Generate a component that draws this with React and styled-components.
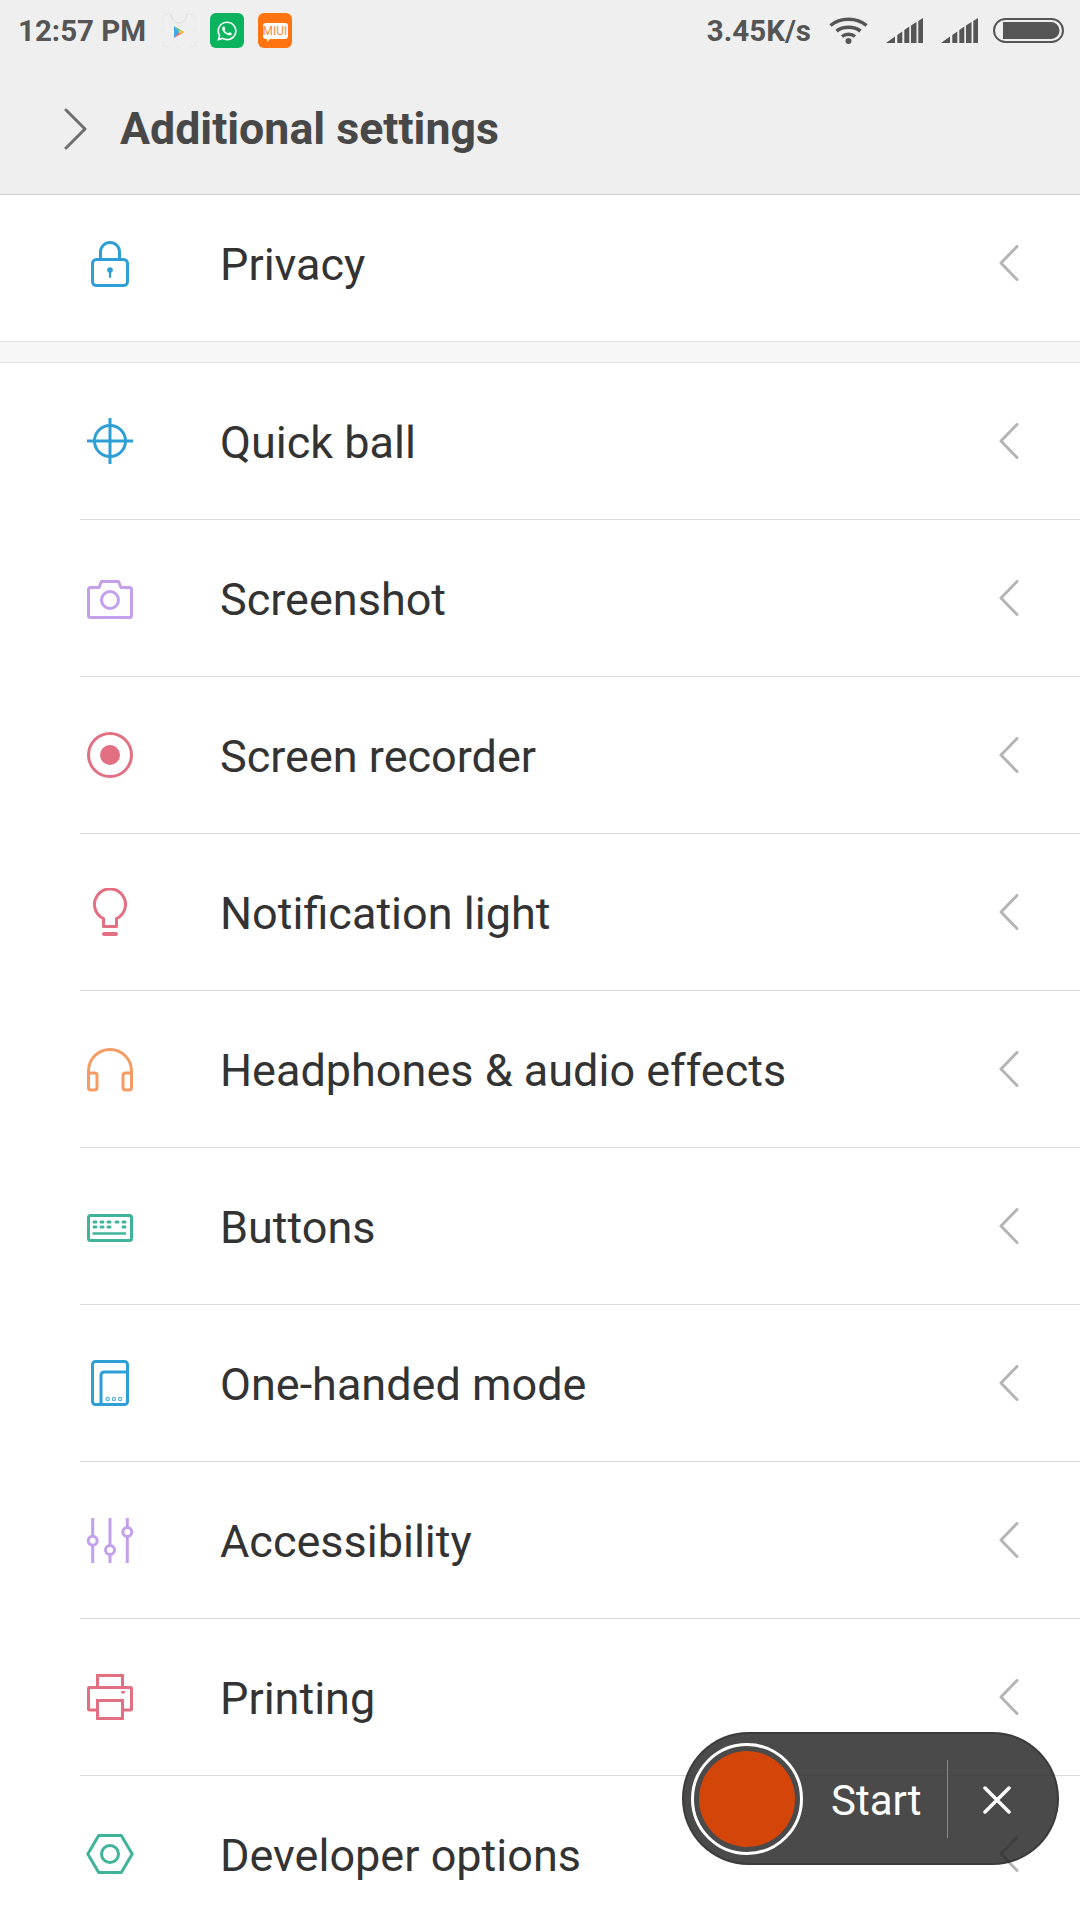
import React from 'react'
import styled, { createGlobalStyle } from 'styled-components'
import { FaWhatsapp } from 'react-icons/fa'

const GlobalStyle = createGlobalStyle`
  html, body {
    margin: 0;
    padding: 0;
    background: #fff;
    font-family: Roboto, "Liberation Sans", sans-serif;
  }
`
const Screen = styled.div`
  width: 1080px;
  height: 1920px;
  position: relative;
  overflow: hidden;
  background: #fff;
`
const Header = styled.header`
  height: 194px;
  background: #efefef;
  border-bottom: 1px solid #cfcfcf;
`
const StatusBar = styled.div`
  height: 60px;
  display: flex;
  align-items: center;
  padding: 0 16px 0 18px;
  color: #555;
  font-size: 29.5px;
  font-weight: 700;
`
const Time = styled.span`
  width: 144px;
  padding-top: 2px;
`
const AppTile = styled.div`
  width: 34px;
  height: 35px;
  margin-right: 14px;
  margin-top: 1px;
  border-radius: 6px;
  display: flex;
  align-items: center;
  justify-content: center;
  background: ${props => props.bg || 'transparent'};
  color: #fff;
`
const MiuiBubble = styled.div`
  width: 25px;
  height: 16px;
  position: relative;
  border-radius: 3px;
  background: #fff;
  color: #ff8a3a;
  font-size: 12px;
  font-weight: 400;
  line-height: 16px;
  text-align: center;
  &::after {
    content: '';
    position: absolute;
    left: 4px;
    bottom: -3px;
    border-top: 3px solid #fff;
    border-right: 3px solid transparent;
  }
`
const Spacer = styled.div`
  flex: 1;
`
const Speed = styled.span`
  margin-right: 18px;
  padding-top: 2px;
`
const StatusIcon = styled.svg`
  display: block;
  margin-left: ${props => props.gap || 0}px;
`
const TitleBar = styled.div`
  height: 131px;
  padding-top: 3px;
  display: flex;
  align-items: center;
  padding-left: 64px;
`
const Title = styled.h1`
  margin: 0 0 0 33px;
  font-size: 44.7px;
  font-weight: 700;
  color: #484848;
`
const Group = styled.section`
  border-bottom: 1px solid #e4e4e4;
`
const Gap = styled.div`
  height: 20px;
  background: #f7f7f7;
  border-bottom: 1px solid #e4e4e4;
`
const Row = styled.div`
  height: ${props => props.height || 156}px;
  margin-left: 80px;
  padding-bottom: ${props => props.pad || 0}px;
  display: flex;
  align-items: center;
  border-bottom: ${props => (props.last ? 'none' : '1px solid #d9d9d9')};
`
const IconSlot = styled.div`
  width: 60px;
  margin-right: 80px;
  padding-top: ${props => props.offset || 0}px;
  display: flex;
  justify-content: center;
`
const Label = styled.span`
  flex: 1;
  padding-top: 2px;
  font-size: 45px;
  color: #333;
`
const Chevron = styled.svg`
  display: block;
  margin-right: 61px;
`
const Recorder = styled.div`
  position: absolute;
  left: 682px;
  top: 1732px;
  width: 377px;
  height: 133px;
  box-sizing: border-box;
  display: flex;
  align-items: center;
  padding-left: 7px;
  border: 2px solid rgba(0, 0, 0, 0.2);
  border-radius: 67px;
  background: rgba(42, 42, 42, 0.85);
  color: #fff;
`
const RecordButton = styled.div`
  width: 112px;
  height: 112px;
  box-sizing: border-box;
  border: 3px solid #fff;
  border-radius: 50%;
  padding: 5px;
  flex: none;
`
const RecordDot = styled.div`
  width: 100%;
  height: 100%;
  border-radius: 50%;
  background: #d4450a;
`
const StartLabel = styled.span`
  margin-left: 28px;
  padding-top: 3px;
  width: 116px;
  font-size: 42px;
`
const Separator = styled.div`
  width: 1px;
  height: 78px;
  background: #8a8a8a;
`
const CloseIcon = styled.svg`
  display: block;
  margin: 3px 0 0 35px;
`

const stroke = { fill: 'none', strokeWidth: 3, strokeLinecap: 'round', strokeLinejoin: 'round' }

const Icon = ({ color, children }) => (
  <svg width="48" height="48" viewBox="0 0 48 48" stroke={color} {...stroke}>
    {children}
  </svg>
)

const LockIcon = () => (
  <Icon color="#2e9fd6">
    <rect x="6.5" y="19.5" width="35" height="26" rx="4" />
    <path d="M14.5 19V12a9.500 9.500 0 0 1 19 0V19" />
    <path d="M24 30v7" strokeWidth="2.200" />
    <circle cx="24" cy="30" r="2.800" fill="#2e9fd6" stroke="none" />
  </Icon>
)
const BallIcon = () => (
  <Icon color="#2e9fd6">
    <circle cx="24" cy="24" r="15.500" />
    <path d="M24 1v46M1 24h46" strokeLinecap="butt" />
  </Icon>
)
const CameraIcon = () => (
  <Icon color="#c39fec">
    <path d="M4.500 13.500H13L15.500 7.500H32.500L35 13.500H43.500a2 2 0 0 1 2 2V41.500a2 2 0 0 1-2 2H4.500a2 2 0 0 1-2-2V15.500a2 2 0 0 1 2-2Z" />
    <circle cx="24" cy="26" r="8.500" />
  </Icon>
)
const RecordIcon = () => (
  <Icon color="#e26f82">
    <circle cx="24" cy="24" r="21.500" />
    <circle cx="24" cy="24" r="8.500" fill="#e26f82" />
  </Icon>
)
const BulbIcon = () => (
  <Icon color="#e26f82">
    <path d="M17.500 30.500A15.500 15.500 0 1 1 30.500 30.500V38.500H17.500Z" />
    <path d="M18 46H30" strokeWidth="4" />
  </Icon>
)
const HeadphonesIcon = () => (
  <Icon color="#f59b63">
    <path d="M2.500 34V26a21.500 21.500 0 0 1 43 0V34" />
    <rect x="2.500" y="28" width="8.500" height="17" rx="2.500" />
    <rect x="37" y="28" width="8.500" height="17" rx="2.500" />
  </Icon>
)
const keys = [[9, 20], [16, 20], [23, 20], [31, 20], [38, 20], [9, 25], [16, 25], [23, 25], [38, 25]]
const KeyboardIcon = () => (
  <Icon color="#40b39b">
    <rect x="2.500" y="13.500" width="43" height="25" rx="2" />
    {keys.map(([x, y]) => (
      <rect key={`${x}-${y}`} x={x - 2.5} y={y - 1.5} width="5" height="3" rx="1.5" fill="#40b39b" stroke="none" />
    ))}
    <path d="M6.500 31.500H40" strokeLinecap="butt" strokeWidth="2.400" />
  </Icon>
)
const OneHandIcon = () => (
  <Icon color="#2e9fd6">
    <rect x="6.500" y="2.500" width="35" height="43" rx="3" />
    <path d="M15 45V16a3 3 0 0 1 3-3H41" />
    <g stroke="#58b3e0" strokeWidth="1.200">
      <circle cx="21.700" cy="40" r="1.600" />
      <circle cx="28" cy="40" r="1.600" />
      <circle cx="34" cy="40" r="1.600" />
    </g>
  </Icon>
)
const SlidersIcon = () => (
  <Icon color="#c39fec">
    <path d="M6.700 2v45M24 2v45M41.300 2v45" strokeLinecap="butt" />
    <circle cx="6.700" cy="24.700" r="4.500" fill="#fff" />
    <circle cx="24" cy="34" r="4.500" fill="#fff" />
    <circle cx="41.300" cy="16" r="4.500" fill="#fff" />
  </Icon>
)
const PrinterIcon = () => (
  <Icon color="#e26f82">
    <path d="M11.500 13V2.500H36.500V13" strokeLinejoin="miter" />
    <path d="M10 37H3.500a1 1 0 0 1-1-1V15.500a1 1 0 0 1 1-1H44.500a1 1 0 0 1 1 1V36a1 1 0 0 1-1 1H38" />
    <rect x="11.500" y="27.500" width="25" height="18" strokeLinejoin="miter" />
    <rect x="35" y="18" width="4" height="2.400" rx="1.200" fill="#e26f82" stroke="none" />
  </Icon>
)
const NutIcon = () => (
  <Icon color="#40b39b">
    <polygon points="1.800,24 12.700,5.500 35.300,5.500 46.200,24 35.300,42.500 12.700,42.500" />
    <circle cx="24" cy="24" r="8.500" />
  </Icon>
)

const SettingRow = ({ icon, label, height, pad, offset, last }) => (
  <Row height={height} pad={pad} last={last}>
    <IconSlot offset={offset}>{icon}</IconSlot>
    <Label>{label}</Label>
    <Chevron width="20" height="36" viewBox="0 0 20 36" fill="none" stroke="#b5b5b5" strokeWidth="3" strokeLinecap="round" strokeLinejoin="round">
      <path d="M18 1.500L2 18L18 34.500" />
    </Chevron>
  </Row>
)

const SignalIcon = ({ gap }) => (
  <StatusIcon gap={gap} width="37" height="25" viewBox="0 0 37 25" fill="#555">
    <path d="M0 25L9 18.500V25ZM11.300 17L16.300 13.500V25H11.300ZM18.300 12L23.300 8.500V25H18.300ZM25 7.500L30.500 4V25H25ZM32.300 3L37 0V25H32.300Z" />
  </StatusIcon>
)

const rows = [
  { label: 'Quick ball', icon: <BallIcon /> },
  { label: 'Screenshot', icon: <CameraIcon /> },
  { label: 'Screen recorder', icon: <RecordIcon /> },
  { label: 'Notification light', icon: <BulbIcon /> },
  { label: 'Headphones & audio effects', icon: <HeadphonesIcon /> },
  { label: 'Buttons', icon: <KeyboardIcon /> },
  { label: 'One-handed mode', icon: <OneHandIcon /> },
  { label: 'Accessibility', icon: <SlidersIcon /> },
  { label: 'Printing', icon: <PrinterIcon /> },
  { label: 'Developer options', icon: <NutIcon />, last: true },
]

const App = () => {
  return (
    <Screen>
      <GlobalStyle />
      <Header>
        <StatusBar>
          <Time>12:57 PM</Time>
          <AppTile>
            <svg width="34" height="35" viewBox="0 0 34 35">
              <path d="M1 7V5a4 4 0 0 1 4-4H7M27 1h2a4 4 0 0 1 4 4V7M33 28v2a4 4 0 0 1-4 4H27M7 34H5a4 4 0 0 1-4-4V28M1 15v5M33 15v5M15 34h4" fill="none" stroke="#e6e6e6" />
              <path d="M9 1a8 9 0 0 0 16 0" fill="none" stroke="#dcdcdc" />
              <path d="M12 13l5.500 6-5.500 6Z" fill="#3fa9e8" />
              <path d="M12 13l10 6h-4.500Z" fill="#4ec07a" />
              <path d="M12 25l10-6h-4.500Z" fill="#e8574f" />
              <path d="M17 17l6 2-6 2Z" fill="#f6c23c" />
            </svg>
          </AppTile>
          <AppTile bg="#0ab45f">
            <FaWhatsapp size={22} />
          </AppTile>
          <AppTile bg="#ff7410">
            <MiuiBubble>MIUI</MiuiBubble>
          </AppTile>
          <Spacer />
          <Speed>3.45K/s</Speed>
          <StatusIcon width="39" height="27" viewBox="0 0 39 27" fill="none" stroke="#555" strokeWidth="3.500">
            <path d="M1.500 8.500C11 0 28 0 37.500 8.500" />
            <path d="M7.500 14C14 9 25 9 31.500 14" />
            <path d="M13 19.500C16.500 16.500 22.500 16.500 26 19.500" />
            <circle cx="19.500" cy="24" r="3" fill="#555" stroke="none" />
          </StatusIcon>
          <SignalIcon gap={18} />
          <SignalIcon gap={18} />
          <StatusIcon gap={15} width="71" height="25" viewBox="0 0 71 25">
            <rect x="1" y="1" width="69" height="23" rx="11.500" fill="none" stroke="#555" strokeWidth="2" />
            <path d="M10 4H58a8.500 8.500 0 0 1 0 17H10Z" fill="#555" />
          </StatusIcon>
        </StatusBar>
        <TitleBar>
          <svg width="23" height="42" viewBox="0 0 23 42" fill="none" stroke="#6e6e6e" strokeWidth="3" strokeLinecap="round" strokeLinejoin="round">
            <path d="M2 2L21 21L2 40" />
          </svg>
          <Title>Additional settings</Title>
        </TitleBar>
      </Header>
      <Group>
        <SettingRow label="Privacy" icon={<LockIcon />} height={136} pad={10} offset={2} last />
      </Group>
      <Gap />
      {rows.map(row => (
        <SettingRow key={row.label} {...row} />
      ))}
      <Recorder>
        <RecordButton>
          <RecordDot />
        </RecordButton>
        <StartLabel>Start</StartLabel>
        <Separator />
        <CloseIcon width="28" height="28" viewBox="0 0 28 28" fill="none" stroke="#fff" strokeWidth="3.500" strokeLinecap="round">
          <path d="M2 2L26 26M26 2L2 26" />
        </CloseIcon>
      </Recorder>
    </Screen>
  )
}

export default App
